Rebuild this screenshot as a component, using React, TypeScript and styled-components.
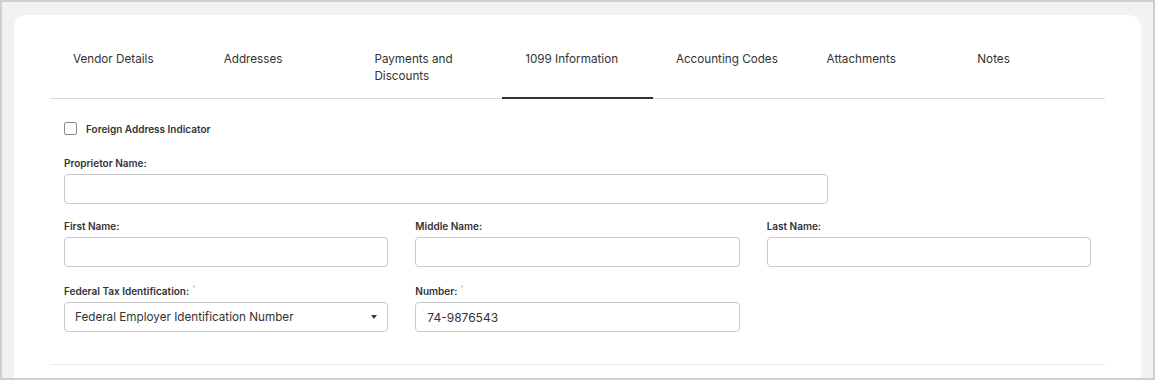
import React from 'react';
import styled, { createGlobalStyle } from 'styled-components';

const GlobalStyle = createGlobalStyle`
  html, body {
    margin: 0;
    padding: 0;
  }
  body {
    font-family: Inter, "Noto Sans", "Liberation Sans", sans-serif;
    color: #2f2f2f;
  }
  * {
    box-sizing: border-box;
  }
`

const Frame = styled.div`
  width: 1155px;
  height: 380px;
  border: 2px solid #ccd1cc;
  background: #f2f2f2;
  padding: 13px 12px 0 12px;
  overflow: hidden;
`

const Card = styled.div`
  background: #ffffff;
  border-radius: 12px 12px 0 0;
  padding: 35px 36px 0;
  height: 400px;
`

const TabBar = styled.div`
  display: flex;
  height: 49px;
  border-bottom: 1px solid #d9d9d9;
`

const Tab = styled.div<{ $active?: boolean }>`
  flex: 1 1 0;
  min-width: 0;
  padding: 1px 23px 0;
  font-size: 11.7px;
  line-height: 17px;
  color: #333333;
  cursor: pointer;
  border-bottom: 2px solid ${p => (p.$active ? '#333333' : 'transparent')};
  margin-bottom: -1px;
`

const Form = styled.div`
  padding: 23px 14px 32px;
  border-bottom: 1px solid #ebebeb;
`

const CheckRow = styled.label`
  display: flex;
  align-items: center;
  gap: 9px;
  height: 13px;
  margin-bottom: 21px;
  font-size: 10px;
  font-weight: 600;
  color: #333333;
`

const Checkbox = styled.span`
  width: 13px;
  height: 13px;
  border: 1px solid #8a8a8a;
  border-radius: 2px;
  background: #fff;
`

const Row = styled.div<{ $cols?: number }>`
  display: grid;
  grid-template-columns: repeat(${p => p.$cols ?? 3}, 1fr);
  column-gap: 27px;
  margin-bottom: 15px;

  &:last-child {
    margin-bottom: 0;
  }
`

const Field = styled.div<{ $width?: number }>`
  display: flex;
  flex-direction: column;
  ${p => (p.$width ? `width: ${p.$width}px;` : '')}
`

const Label = styled.div`
  font-size: 10px;
  font-weight: 600;
  line-height: 14px;
  color: #333333;
  margin-bottom: 4px;
`

const Required = styled.sup`
  font-size: 7px;
  font-weight: 400;
  color: #e2bcbc;
  margin-left: 3px;
  vertical-align: 4px;
`

const Input = styled.div`
  height: 30px;
  border: 1px solid #c9c9c9;
  border-radius: 4px;
  background: #ffffff;
  padding: 0 11px;
  display: flex;
  align-items: center;
  font-size: 12px;
  color: #333333;
`

const Select = styled(Input)`
  justify-content: space-between;
  padding: 0 10px;
  font-size: 11.7px;
`

const Caret = styled.span`
  width: 0;
  height: 0;
  border-left: 3.5px solid transparent;
  border-right: 3.5px solid transparent;
  border-top: 4px solid #3a3a3a;
`

const tabs = [
  'Vendor Details',
  'Addresses',
  'Payments and Discounts',
  '1099 Information',
  'Accounting Codes',
  'Attachments',
  'Notes',
]

const App: React.FC = () => {
  return (
    <>
      <GlobalStyle />
      <Frame>
        <Card>
          <TabBar>
            {tabs.map(t => (
              <Tab key={t} $active={t === '1099 Information'}>
                {t}
              </Tab>
            ))}
          </TabBar>
          <Form>
            <CheckRow>
              <Checkbox />
              Foreign Address Indicator
            </CheckRow>
            <Row $cols={1}>
              <Field $width={764}>
                <Label>Proprietor Name:</Label>
                <Input />
              </Field>
            </Row>
            <Row>
              <Field>
                <Label>First Name:</Label>
                <Input />
              </Field>
              <Field>
                <Label>Middle Name:</Label>
                <Input />
              </Field>
              <Field>
                <Label>Last Name:</Label>
                <Input />
              </Field>
            </Row>
            <Row>
              <Field>
                <Label>
                  Federal Tax Identification:<Required>*</Required>
                </Label>
                <Select>
                  Federal Employer Identification Number
                  <Caret />
                </Select>
              </Field>
              <Field>
                <Label>
                  Number:<Required>*</Required>
                </Label>
                <Input>74-9876543</Input>
              </Field>
            </Row>
          </Form>
        </Card>
      </Frame>
    </>
  );
};

export default App
